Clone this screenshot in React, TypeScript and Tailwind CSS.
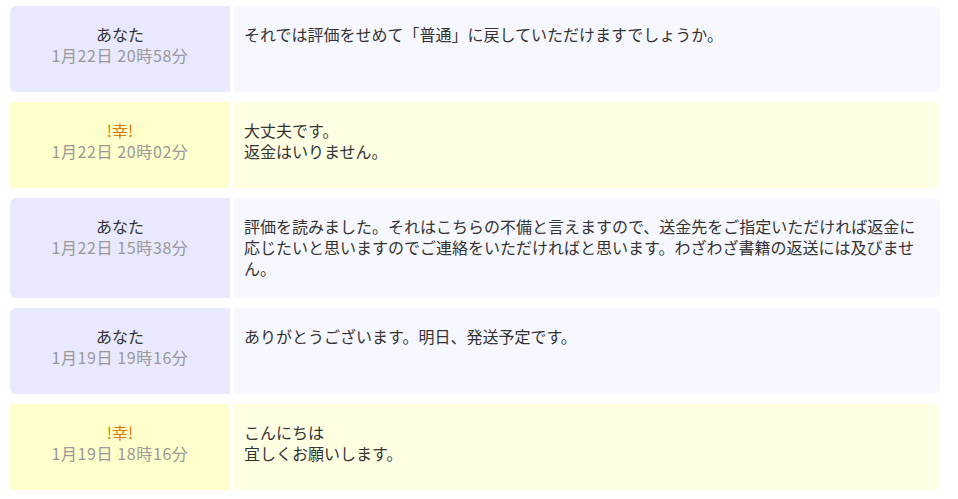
const messages = [
  {
    from: 'me',
    name: 'あなた',
    date: '1月22日 20時58分',
    body: ['それでは評価をせめて「普通」に戻していただけますでしょうか。'],
  },
  {
    from: 'them',
    name: '!幸!',
    date: '1月22日 20時02分',
    body: ['大丈夫です。', '返金はいりません。'],
  },
  {
    from: 'me',
    name: 'あなた',
    date: '1月22日 15時38分',
    body: [
      '評価を読みました。それはこちらの不備と言えますので、送金先をご指定いただければ返金に応じたいと思いますのでご連絡をいただければと思います。わざわざ書籍の返送には及びません。',
    ],
  },
  {
    from: 'me',
    name: 'あなた',
    date: '1月19日 19時16分',
    body: ['ありがとうございます。明日、発送予定です。'],
  },
  {
    from: 'them',
    name: '!幸!',
    date: '1月19日 18時16分',
    body: ['こんにちは', '宜しくお願いします。'],
  },
]

export default function App() {
  return (
    <div
      className="w-[958px] h-[499px] bg-white pt-[6px] pl-[10px] pr-[18px] flex flex-col gap-[10px] text-[16px] leading-[21px] text-[#333]"
      style={{ fontFamily: '"Noto Sans CJK JP", "Noto Sans", sans-serif' }}
    >
      {messages.map((m, i) => {
        const mine = m.from === 'me'
        return (
          <div key={i} className="flex gap-[4px] min-h-[86px]">
            {/* sender */}
            <div
              className={`w-[220px] shrink-0 pt-[18px] pb-[18px] text-center ${
                mine ? 'bg-[#e8e8ff] rounded-l-[6px]' : 'bg-[#ffffcc]'
              }`}
            >
              <div className={mine ? 'text-[#333]' : 'text-[#e07b00]'}>{m.name}</div>
              <div className="text-[#999] tracking-[0.6px]">{m.date}</div>
            </div>
            {/* message */}
            <div
              className={`flex-1 pt-[18px] pb-[19px] px-[10px] rounded-r-[6px] ${
                mine ? 'bg-[#f7f7ff]' : 'bg-[#ffffe3]'
              }`}
            >
              {m.body.map((line, j) => (
                <div key={j}>{line}</div>
              ))}
            </div>
          </div>
        )
      })}
    </div>
  )
}
